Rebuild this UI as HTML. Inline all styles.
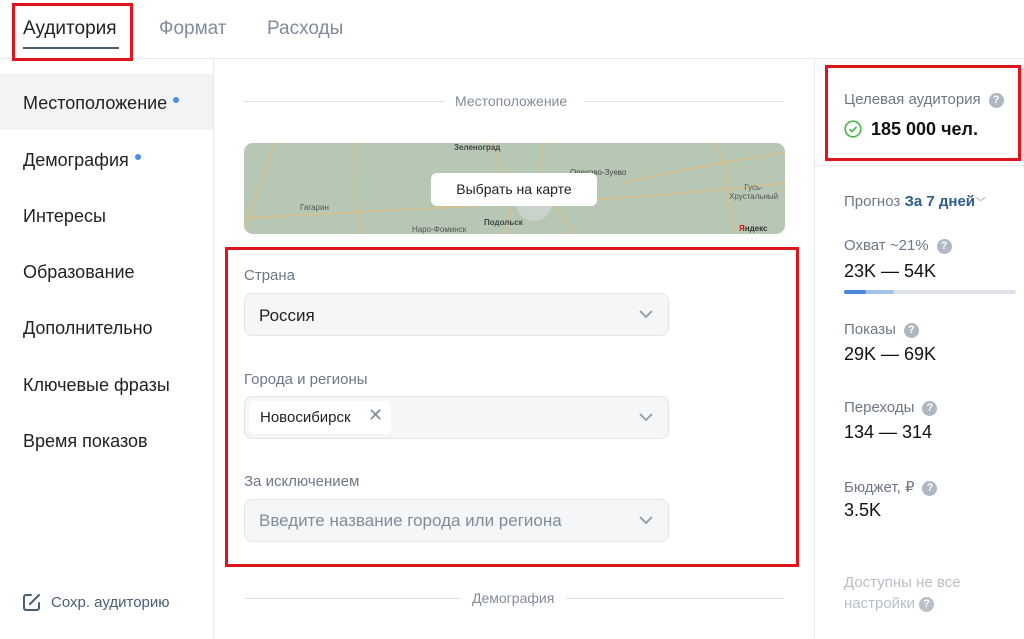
<!DOCTYPE html>
<html><head><meta charset="utf-8"><style>
*{box-sizing:border-box;margin:0;padding:0}
body{width:1024px;height:639px;overflow:hidden;background:#fff;font-family:"Liberation Sans","Noto Sans CJK SC",sans-serif;color:#222;position:relative}
.a{position:absolute}
.tab{font-size:19px;color:#818c99;top:18px}
.nav{left:23px;font-size:18px;color:#222}
.dot{display:inline-block;width:6px;height:6px;border-radius:50%;background:#4a8fe0;margin-left:6px;vertical-align:middle;position:relative;top:-4px}
.lbl{font-size:15px;color:#6d7885}
.inp{left:244px;width:425px;height:43px;background:#f5f6f8;border:1px solid #e3e5e8;border-radius:8px}
.chev{position:absolute;right:14px;top:15px;width:16px;height:10px}
.q{display:inline-block;width:15px;height:15px;border-radius:50%;background:#aeb7c2;color:#fff;font-size:11px;font-weight:bold;text-align:center;line-height:15px;margin-left:8px;vertical-align:1px}
.sl{font-size:15px;color:#6d7885;left:844px}
.sv{font-size:18px;color:#111;left:844px}
.red{border:3px solid #e0141c}
</style></head><body>
<div class="a" style="left:0;top:58px;width:1024px;height:1px;background:#e7e8ec"></div>
<div class="a tab" style="left:23px;color:#222">Аудитория</div>
<div class="a" style="left:23px;top:47px;width:96px;height:2px;background:#4a5e74"></div>
<div class="a tab" style="left:159px">Формат</div>
<div class="a tab" style="left:267px">Расходы</div>
<div class="a red" style="left:12px;top:3px;width:121px;height:58px"></div>

<div class="a" style="left:213px;top:59px;width:1px;height:580px;background:#e7e8ec"></div>
<div class="a" style="left:0;top:74px;width:213px;height:56px;background:#f2f3f5"></div>
<div class="a nav" style="top:93px">Местоположение<span class="dot"></span></div>
<div class="a nav" style="top:150px">Демография<span class="dot"></span></div>
<div class="a nav" style="top:206px">Интересы</div>
<div class="a nav" style="top:262px">Образование</div>
<div class="a nav" style="top:318px">Дополнительно</div>
<div class="a nav" style="top:375px">Ключевые фразы</div>
<div class="a nav" style="top:431px">Время показов</div>
<svg class="a" style="left:22px;top:592px" width="20" height="20" viewBox="0 0 20 20"><path d="M9 3H4a2 2 0 0 0-2 2v11a2 2 0 0 0 2 2h11a2 2 0 0 0 2-2v-5" fill="none" stroke="#4a5e74" stroke-width="2" stroke-linecap="round"/><path d="M8 12L17 3" stroke="#4a5e74" stroke-width="2" stroke-linecap="round"/></svg>
<div class="a" style="left:51px;top:594px;font-size:15px;color:#4a5e74">Сохр. аудиторию</div>

<div class="a" style="left:244px;top:101px;width:200px;height:1px;background:#dcdfe3"></div>
<div class="a" style="left:584px;top:101px;width:200px;height:1px;background:#dcdfe3"></div>
<div class="a" style="left:455px;top:93px;font-size:14px;color:#818c99">Местоположение</div>
<div class="a" style="left:244px;top:143px;width:541px;height:91px;border-radius:9px;background:#b6c7b4;overflow:hidden">
<svg width="541" height="91" style="position:absolute;left:0;top:0"><g fill="none" stroke="#d9bf8a" stroke-width="1.5"><path d="M30 0C20 30 10 60 0 91"/><path d="M110 0C115 30 105 70 120 91"/><path d="M0 75C80 70 200 65 290 60S450 50 541 40"/><path d="M250 0C260 40 270 70 260 91"/><path d="M300 0C290 40 310 60 330 91"/><path d="M380 40C420 30 470 20 541 10"/><path d="M470 0C490 30 480 60 490 91"/></g><circle cx="290" cy="60" r="18" fill="#c9d2cb"/></svg>
<div class="a" style="left:56px;top:60px;font-size:8px;color:#555">Гагарин</div>
<div class="a" style="left:210px;top:0px;font-size:8px;color:#444;font-weight:bold">Зеленоград</div>
<div class="a" style="left:326px;top:25px;font-size:8px;color:#444">Орехово-Зуево</div>
<div class="a" style="left:485px;top:40px;font-size:8px;color:#555;text-align:center">Гусь-<br>Хрустальный</div>
<div class="a" style="left:240px;top:75px;font-size:8px;color:#444;font-weight:bold">Подольск</div>
<div class="a" style="left:168px;top:82px;font-size:8px;color:#555">Наро-Фоминск</div>
<div class="a" style="left:495px;top:81px;font-size:8px;color:#333;font-weight:bold"><span style="color:#e00">Я</span>ндекс</div>
<div class="a" style="left:187px;top:30px;width:166px;height:33px;background:#fff;border-radius:6px;font-size:14px;color:#222;text-align:center;line-height:33px">Выбрать на карте</div>
</div>

<div class="a lbl" style="left:244px;top:267px">Страна</div>
<div class="a inp" style="top:293px"><span class="a" style="left:14px;top:12px;font-size:17px;color:#222">Россия</span><svg class="chev" viewBox="0 0 16 10"><path d="M2 2l6 6 6-6" fill="none" stroke="#99a2ad" stroke-width="2"/></svg></div>
<div class="a lbl" style="left:244px;top:371px">Города и регионы</div>
<div class="a inp" style="top:396px"><div class="a" style="left:4px;top:4px;width:142px;height:33px;background:#fff;border-radius:6px"><span class="a" style="left:11px;top:8px;font-size:15px;color:#222">Новосибирск</span><span class="a" style="left:119px;top:4px;font-size:18px;color:#818c99">✕</span></div><svg class="chev" viewBox="0 0 16 10"><path d="M2 2l6 6 6-6" fill="none" stroke="#99a2ad" stroke-width="2"/></svg></div>
<div class="a lbl" style="left:244px;top:473px">За исключением</div>
<div class="a inp" style="top:499px"><span class="a" style="left:14px;top:11px;font-size:17px;color:#818c99">Введите название города или региона</span><svg class="chev" viewBox="0 0 16 10"><path d="M2 2l6 6 6-6" fill="none" stroke="#99a2ad" stroke-width="2"/></svg></div>
<div class="a red" style="left:225px;top:247px;width:574px;height:320px"></div>
<div class="a" style="left:244px;top:598px;width:218px;height:1px;background:#dcdfe3"></div>
<div class="a" style="left:566px;top:598px;width:218px;height:1px;background:#dcdfe3"></div>
<div class="a" style="left:472px;top:590px;font-size:14px;color:#818c99">Демография</div>

<div class="a" style="left:814px;top:59px;width:1px;height:580px;background:#e7e8ec"></div>
<div class="a" style="left:815px;top:165px;width:209px;height:1px;background:#e7e8ec"></div>
<div class="a" style="left:1019px;top:68px;width:5px;height:92px;background:#d7d9dd"></div>
<div class="a sl" style="top:91px">Целевая аудитория<span class="q">?</span></div>
<svg class="a" style="left:844px;top:120px" width="18" height="18" viewBox="0 0 18 18"><circle cx="9" cy="9" r="7.8" fill="none" stroke="#4bb34b" stroke-width="1.6"/><path d="M5.5 9.2l2.4 2.4 4.6-4.6" fill="none" stroke="#4bb34b" stroke-width="1.6"/></svg>
<div class="a" style="left:871px;top:119px;font-size:18px;font-weight:bold;color:#111">185 000 чел.</div>
<div class="a red" style="left:825px;top:65px;width:196px;height:96px"></div>
<div class="a sl" style="top:193px">Прогноз <b style="color:#2d5c8e">За 7 дней</b><span style="color:#99a2ad;font-size:11px">﹀</span></div>
<div class="a sl" style="top:237px">Охват ~21%<span class="q">?</span></div>
<div class="a sv" style="top:261px">23K — 54K</div>
<div class="a" style="left:844px;top:290px;width:172px;height:4px;border-radius:2px;background:#dfe3e8"><div style="width:50px;height:4px;border-radius:2px;background:#a3c4ea"></div><div class="a" style="left:0;top:0;width:22px;height:4px;border-radius:2px;background:#4a86d6"></div></div>
<div class="a sl" style="top:321px">Показы<span class="q">?</span></div>
<div class="a sv" style="top:344px">29K — 69K</div>
<div class="a sl" style="top:399px">Переходы<span class="q">?</span></div>
<div class="a sv" style="top:422px">134 — 314</div>
<div class="a sl" style="top:478px">Бюджет, ₽<span class="q">?</span></div>
<div class="a sv" style="top:500px">3.5K</div>
<div class="a sl" style="top:572px;color:#b8bfc7;line-height:21px">Доступны не все<br>настройки<span class="q" style="background:#b8bfc7;margin-left:4px">?</span></div>
</body></html>
